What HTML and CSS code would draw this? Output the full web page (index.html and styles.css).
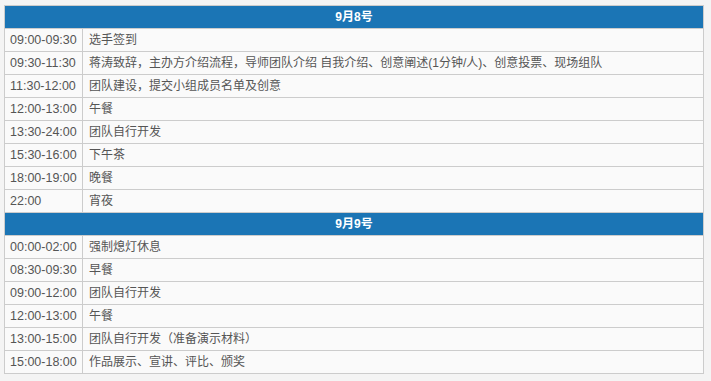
FILE: index.html
```html
<!DOCTYPE html>
<html lang="zh">
<head>
<meta charset="utf-8">
<link rel="stylesheet" href="styles.css">
</head>
<body>
<table class="schedule">
  <colgroup><col class="c-time"><col></colgroup>
  <tbody>
    <tr class="day"><th colspan="2">9月8号</th></tr>
    <tr><td class="time">09:00-09:30</td><td>选手签到</td></tr>
    <tr><td class="time">09:30-11:30</td><td>蒋涛致辞，主办方介绍流程，导师团队介绍 自我介绍、创意阐述(1分钟/人)、创意投票、现场组队</td></tr>
    <tr><td class="time">11:30-12:00</td><td>团队建设，提交小组成员名单及创意</td></tr>
    <tr><td class="time">12:00-13:00</td><td>午餐</td></tr>
    <tr><td class="time">13:30-24:00</td><td>团队自行开发</td></tr>
    <tr><td class="time">15:30-16:00</td><td>下午茶</td></tr>
    <tr><td class="time">18:00-19:00</td><td>晚餐</td></tr>
    <tr><td class="time">22:00</td><td>宵夜</td></tr>
    <tr class="day"><th colspan="2">9月9号</th></tr>
    <tr><td class="time">00:00-02:00</td><td>强制熄灯休息</td></tr>
    <tr><td class="time">08:30-09:30</td><td>早餐</td></tr>
    <tr><td class="time">09:00-12:00</td><td>团队自行开发</td></tr>
    <tr><td class="time">12:00-13:00</td><td>午餐</td></tr>
    <tr><td class="time">13:00-15:00</td><td>团队自行开发（准备演示材料）</td></tr>
    <tr><td class="time">15:00-18:00</td><td>作品展示、宣讲、评比、颁奖</td></tr>
  </tbody>
</table>
</body>
</html>
```

FILE: styles.css
```css
html, body {
  margin: 0;
  background: #f4f4f4;
}
body {
  padding: 5px 7px 0 4px;
  font-family: "Liberation Sans", Arial, "Noto Sans CJK SC", sans-serif;
  font-size: 12px;
  color: #555;
}
.schedule {
  width: 700px;
  border-collapse: collapse;
  table-layout: fixed;
  background: #fafafa;
}
.c-time { width: 78px; }
.schedule td, .schedule th {
  border: 1px solid #cccccc;
  height: 22px;
  padding: 0 0 0 6px;
  line-height: 22px;
  white-space: nowrap;
  text-align: left;
  box-sizing: border-box;
}
.schedule .time {
  font-size: 12.5px;
  padding-left: 5px;
}
.schedule .day th {
  background: #1b75b5;
  color: #fff;
  font-weight: bold;
  text-align: center;
  padding: 0;
}
```
